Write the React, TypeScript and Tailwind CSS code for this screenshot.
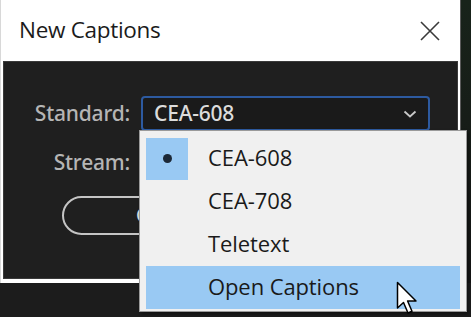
import React from 'react';

const items = [
  { label: 'CEA-608', checked: true, hover: false },
  { label: 'CEA-708', checked: false, hover: false },
  { label: 'Teletext', checked: false, hover: false },
  { label: 'Open Captions', checked: false, hover: true },
];

function CloseIcon() {
  return (
    <svg width="22" height="22" viewBox="0 0 22 22" className="text-[#3a3a3a]">
      <path d="M2 2L20 20M20 2L2 20" stroke="currentColor" strokeWidth="1.6" fill="none" />
    </svg>
  );
}

function Chevron() {
  return (
    <svg width="14" height="8" viewBox="0 0 14 8" className="text-[#c8c8c8]">
      <path d="M1.5 1.5L7 6.5L12.5 1.5" stroke="currentColor" strokeWidth="1.8" fill="none" />
    </svg>
  );
}

function Cursor() {
  return (
    <svg width="26" height="36" viewBox="0 0 26 36">
      <path
        d="M1.5 1.5 L1.5 27 L7.5 21.5 L12 32 L16 30.2 L11.6 20 L20 20 Z"
        fill="#ffffff"
        stroke="#000000"
        strokeWidth="1.5"
        strokeLinejoin="round"
      />
    </svg>
  );
}

function Dropdown() {
  return (
    <div className="absolute left-[139px] top-[130px] w-[328px] h-[182px] bg-[#f0f0f0] border border-[#9a9a9a] shadow-[2px_2px_3px_rgba(0,0,0,0.4)] pt-[6px] px-[6px]">
      {items.map((it) => (
        <div
          key={it.label}
          className={`flex items-center h-[43px] ${it.hover ? 'bg-[#99c9f3]' : ''}`}
        >
          <div
            className={`w-[42px] h-[42px] flex items-center justify-center ${it.checked ? 'bg-[#99c9f3]' : ''}`}
          >
            {it.checked && <span className="w-[9px] h-[9px] rounded-full bg-[#1c2836]" />}
          </div>
          <span className="relative -top-[2px] ml-[20px] text-[22px] text-[#1a1a1a] leading-none font-['Open_Sans',sans-serif] tracking-[-0.1px]">
            {it.label}
          </span>
        </div>
      ))}
    </div>
  );
}

export default function App() {
  return (
    <div className="relative w-[471px] h-[317px] bg-[#1c1c1c] overflow-hidden">
      <div className="flex h-[283px]">
        {/* Dialog window */}
        <div className="w-[460px] h-[283px] bg-white border-l-[1px] border-[#d8d8d8] flex flex-col">
          <div className="h-[61px] flex items-center justify-between pl-[18px] pr-[19px]">
            <span className="text-[22.5px] text-[#1b1b1b] font-['Open_Sans',sans-serif] tracking-[-0.3px] pb-[2px]">
              New Captions
            </span>
            <CloseIcon />
          </div>
          <div className="mx-[2px] h-[218px] bg-[#1f1f1f] border border-[#3a3a3a] font-['Noto_Sans',sans-serif]">
            <div className="grid grid-cols-[126px_1fr] gap-x-[11px] pt-[34px] pr-[27px]">
              <span className="text-right text-[21px] leading-[35px] text-[#b5b5b5] font-medium tracking-[-0.2px]">Standard:</span>
              <div className="h-[35px] rounded-[4px] border-2 border-[#2d5aa0] bg-[#1a1a1a] flex items-center justify-between pl-[11px] pr-[11px]">
                <span className="text-[21px] text-[#dcdcdc] font-medium tracking-[-0.2px]">CEA-608</span>
                <Chevron />
              </div>
              <span className="text-right text-[21px] leading-[30px] text-[#b5b5b5] font-medium tracking-[-0.2px] mt-[16px]">Stream:</span>
              <div />
            </div>
            <div className="mt-[19px] ml-[58px] w-[180px] h-[39px] rounded-full border-2 border-[#c4c4c4] flex items-center pl-[72px]">
              <span className="text-[19px] text-[#e0e0e0]">Cancel</span>
            </div>
          </div>
        </div>
        {/* Desktop strip */}
        <div className="flex-1 bg-gradient-to-b from-[#18231a] to-[#151515] border-l border-[#5a5a5a]" />
      </div>
      <Dropdown />
      <div className="absolute left-[396px] top-[281px]">
        <Cursor />
      </div>
    </div>
  );
}
